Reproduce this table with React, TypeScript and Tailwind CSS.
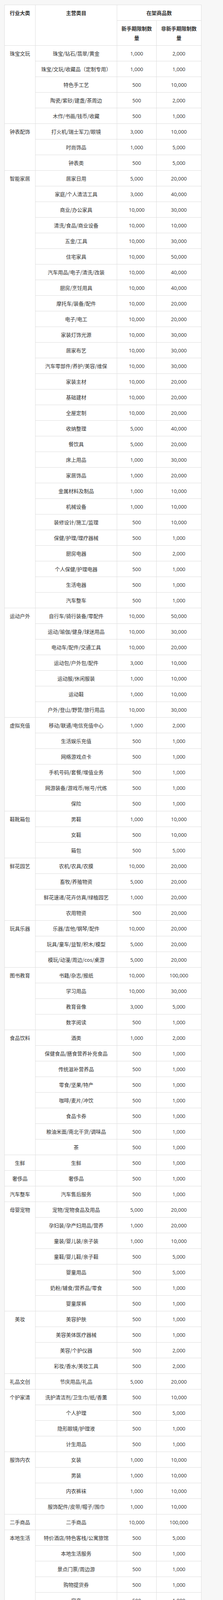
import React from "react";

type Row = [string, string, string];
type Group = { cat: string; rows: Row[] };

const groups: Group[] = [
  { cat: "珠宝文玩", rows: [
    ["珠宝/钻石/翡翠/黄金", "1,000", "2,000"],
    ["珠宝/文玩/收藏品（定制专用）", "1,000", "1,000"],
    ["特色手工艺", "500", "10,000"],
    ["陶瓷/紫砂/建盏/茶周边", "500", "2,000"],
    ["木作/书画/钱币/收藏", "500", "1,000"],
  ] },
  { cat: "钟表配饰", rows: [
    ["打火机/瑞士军刀/眼镜", "3,000", "10,000"],
    ["时尚饰品", "1,000", "5,000"],
    ["钟表类", "500", "5,000"],
  ] },
  { cat: "智能家居", rows: [
    ["居家日用", "5,000", "20,000"],
    ["家庭/个人清洁工具", "3,000", "40,000"],
    ["商业/办公家具", "10,000", "30,000"],
    ["清洗/食品/商业设备", "10,000", "10,000"],
    ["五金/工具", "10,000", "30,000"],
    ["住宅家具", "10,000", "50,000"],
    ["汽车用品/电子/清洗/改装", "10,000", "40,000"],
    ["厨房/烹饪用具", "10,000", "40,000"],
    ["摩托车/装备/配件", "10,000", "20,000"],
    ["电子/电工", "10,000", "20,000"],
    ["家装灯饰光源", "10,000", "30,000"],
    ["居家布艺", "10,000", "30,000"],
    ["汽车零部件/养护/美容/维保", "10,000", "30,000"],
    ["家装主材", "10,000", "20,000"],
    ["基础建材", "10,000", "20,000"],
    ["全屋定制", "10,000", "20,000"],
    ["收纳整理", "5,000", "40,000"],
    ["餐饮具", "5,000", "20,000"],
    ["床上用品", "1,000", "30,000"],
    ["家居饰品", "1,000", "20,000"],
    ["金属材料及制品", "1,000", "10,000"],
    ["机械设备", "1,000", "10,000"],
    ["装修设计/施工/监理", "500", "10,000"],
    ["保健/护理/理疗器械", "500", "1,000"],
    ["厨房电器", "500", "2,000"],
    ["个人保健/护理电器", "500", "1,000"],
    ["生活电器", "500", "1,000"],
    ["汽车整车", "500", "1,000"],
  ] },
  { cat: "运动户外", rows: [
    ["自行车/骑行装备/零配件", "10,000", "50,000"],
    ["运动/瑜伽/健身/球迷用品", "10,000", "30,000"],
    ["电动车/配件/交通工具", "10,000", "20,000"],
    ["运动包/户外包/配件", "3,000", "10,000"],
    ["运动服/休闲服装", "1,000", "10,000"],
    ["运动鞋", "1,000", "10,000"],
    ["户外/登山/野营/旅行用品", "10,000", "30,000"],
  ] },
  { cat: "虚拟充值", rows: [
    ["移动/联通/电信充值中心", "1,000", "2,000"],
    ["生活娱乐充值", "500", "1,000"],
    ["网络游戏点卡", "500", "1,000"],
    ["手机号码/套餐/增值业务", "500", "1,000"],
    ["网游装备/游戏币/帐号/代练", "500", "1,000"],
    ["保险", "500", "1,000"],
  ] },
  { cat: "鞋靴箱包", rows: [
    ["男鞋", "1,000", "10,000"],
    ["女鞋", "500", "10,000"],
    ["箱包", "500", "5,000"],
  ] },
  { cat: "鲜花园艺", rows: [
    ["农机/农具/农膜", "10,000", "20,000"],
    ["畜牧/养殖物资", "5,000", "20,000"],
    ["鲜花速递/花卉仿真/绿植园艺", "1,000", "20,000"],
    ["农用物资", "500", "20,000"],
  ] },
  { cat: "玩具乐器", rows: [
    ["乐器/吉他/钢琴/配件", "10,000", "20,000"],
    ["玩具/童车/益智/积木/模型", "5,000", "20,000"],
    ["模玩/动漫/周边/cos/桌游", "5,000", "20,000"],
  ] },
  { cat: "图书教育", rows: [
    ["书籍/杂志/报纸", "10,000", "100,000"],
    ["学习用品", "10,000", "30,000"],
    ["教育音像", "3,000", "5,000"],
    ["数字阅读", "500", "1,000"],
  ] },
  { cat: "食品饮料", rows: [
    ["酒类", "1,000", "2,000"],
    ["保健食品/膳食营养补充食品", "500", "1,000"],
    ["传统滋补营养品", "500", "1,000"],
    ["零食/坚果/特产", "500", "1,000"],
    ["咖啡/麦片/冲饮", "500", "1,000"],
    ["食品卡券", "500", "1,000"],
    ["粮油米面/南北干货/调味品", "500", "1,000"],
    ["茶", "500", "1,000"],
  ] },
  { cat: "生鲜", rows: [["生鲜", "500", "1,000"]] },
  { cat: "奢侈品", rows: [["奢侈品", "500", "1,000"]] },
  { cat: "汽车整车", rows: [["汽车售后服务", "500", "1,000"]] },
  { cat: "母婴宠物", rows: [
    ["宠物/宠物食品及用品", "5,000", "20,000"],
    ["孕妇装/孕产妇用品/营养", "1,000", "20,000"],
    ["童装/婴儿装/亲子装", "1,000", "10,000"],
    ["童鞋/婴儿鞋/亲子鞋", "500", "5,000"],
    ["婴童用品", "500", "5,000"],
    ["奶粉/辅食/营养品/零食", "500", "1,000"],
    ["婴童尿裤", "500", "1,000"],
  ] },
  { cat: "美妆", rows: [
    ["美容护肤", "500", "1,000"],
    ["美容美体医疗器械", "500", "1,000"],
    ["美容/个护仪器", "500", "2,000"],
    ["彩妆/香水/美妆工具", "500", "2,000"],
  ] },
  { cat: "礼品文创", rows: [["节庆用品/礼品", "5,000", "20,000"]] },
  { cat: "个护家清", rows: [
    ["洗护清洁剂/卫生巾/纸/香薰", "500", "10,000"],
    ["个人护理", "500", "5,000"],
    ["隐形眼镜/护理液", "500", "1,000"],
    ["计生用品", "500", "1,000"],
  ] },
  { cat: "服饰内衣", rows: [
    ["女装", "1,000", "10,000"],
    ["男装", "1,000", "10,000"],
    ["内衣裤袜", "1,000", "10,000"],
    ["服饰配件/皮带/帽子/围巾", "1,000", "10,000"],
  ] },
  { cat: "二手商品", rows: [["二手商品", "10,000", "100,000"]] },
  { cat: "本地生活", rows: [
    ["特价酒店/特色客栈/公寓旅馆", "500", "5,000"],
    ["本地生活服务", "500", "1,000"],
    ["景点门票/周边游", "500", "1,000"],
    ["购物提货券", "500", "1,000"],
    ["房产", "500", "1,000"],
    ["度假线路/签证送关/旅游服务", "500", "1,000"],
    ["电影/演出/赛事", "500", "1,000"],
    ["教育培训", "500", "1,000"],
    ["出行与交通", "500", "1,000"],
    ["线下消费卡", "500", "1,000"],
    ["兑换卡", "500", "1,000"],
    ["医疗及健康服务", "500", "1,000"],
  ] },
  { cat: "3C数码家电", rows: [
    ["3C数码配件", "5,000", "100,000"],
    ["智能设备", "1,000", "50,000"],
    ["大家电", "1,000", "10,000"],
    ["电玩/配件/游戏/攻略", "500", "10,000"],
    ["手机", "500", "2,000"],
    ["办公用品/办公设备/耗材/相关服务", "500", "10,000"],
    ["电脑硬件/显示器/电脑周边", "500", "10,000"],
    ["影音电器", "500", "10,000"],
    ["网络设备/网络相关", "500", "5,000"],
    ["笔记本电脑", "500", "1,000"],
    ["DIY电脑", "500", "1,000"],
    ["数码存储设备", "500", "1,000"],
    ["电子元器件市场", "500", "1,000"],
    ["品牌台机/品牌一体机/服务器", "500", "1,000"],
    ["摄影/摄像", "500", "1,000"],
    ["平板电脑/MID", "500", "1,000"],
    ["电子教育", "500", "1,000"],
  ] },
];

// collapsed borders add 1px per row, so 8 + 24 + 7 keeps rows at 40px
const cell = "border border-[#dedede] px-2 pt-2 pb-[7px] text-center align-top";
const num = cell + " font-['Open_Sans',sans-serif]";

export default function App() {
  return (
    <div className="bg-[#f7f7f7] pt-[12px] pb-[15px] pl-[11px] font-['Noto_Sans_CJK_SC',sans-serif] text-[13px] leading-6 text-[#333]">
      <table className="w-[504px] table-fixed border-collapse bg-white">
        <colgroup>
          <col className="w-[79px]" />
          <col className="w-[209px]" />
          <col className="w-[101px]" />
          <col className="w-[115px]" />
        </colgroup>
        <thead className="font-bold">
          <tr>
            <th rowSpan={2} className={cell}>行业大类</th>
            <th rowSpan={2} className={cell}>主营类目</th>
            <th colSpan={2} className={cell}>在架商品数</th>
          </tr>
          <tr>
            <th className={cell}>新手期限制数量</th>
            <th className={cell}>非新手期限制数量</th>
          </tr>
        </thead>
        <tbody>
          {groups.map((g) =>
            g.rows.map((r, i) => (
              <tr key={g.cat + r[0]}>
                {i === 0 && <td rowSpan={g.rows.length} className={cell}>{g.cat}</td>}
                <td className={cell}>{r[0]}</td>
                <td className={num}>{r[1]}</td>
                <td className={num}>{r[2]}</td>
              </tr>
            ))
          )}
        </tbody>
      </table>
    </div>
  );
}
